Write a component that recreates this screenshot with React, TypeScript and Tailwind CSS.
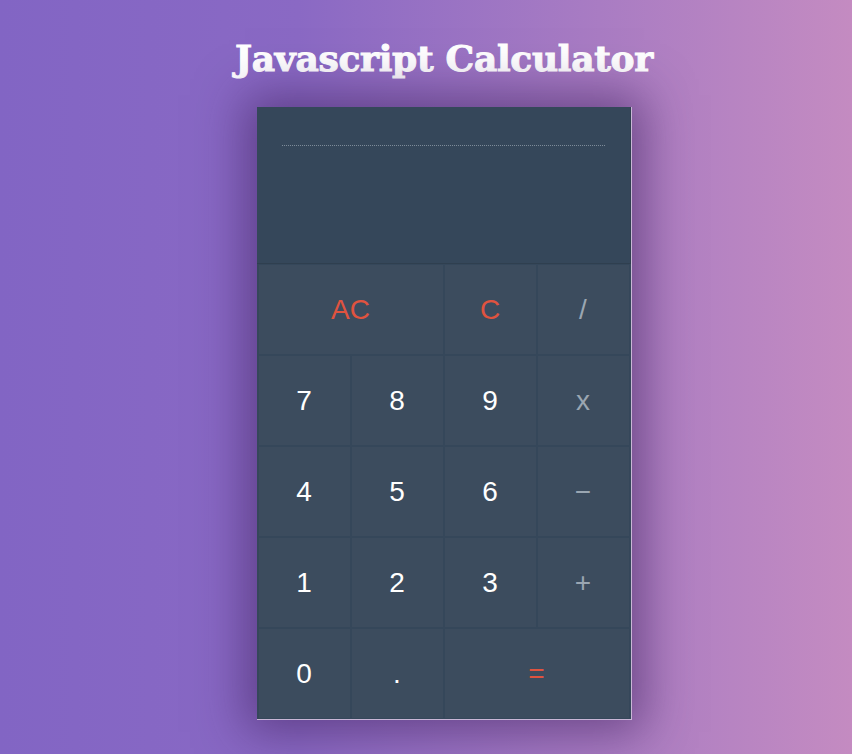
import React from "react";

type Key = { label: string; tone: "num" | "op" | "red"; span?: boolean };

const keys: Key[] = [
  { label: "AC", tone: "red", span: true },
  { label: "C", tone: "red" },
  { label: "/", tone: "op" },
  { label: "7", tone: "num" },
  { label: "8", tone: "num" },
  { label: "9", tone: "num" },
  { label: "x", tone: "op" },
  { label: "4", tone: "num" },
  { label: "5", tone: "num" },
  { label: "6", tone: "num" },
  { label: "−", tone: "op" },
  { label: "1", tone: "num" },
  { label: "2", tone: "num" },
  { label: "3", tone: "num" },
  { label: "+", tone: "op" },
  { label: "0", tone: "num" },
  { label: ".", tone: "num" },
  { label: "=", tone: "red", span: true },
];

const toneClass = {
  num: "text-white",
  op: "text-[#9aa6b2]",
  red: "text-[#e0533f]",
};

export default function App() {
  return (
    <div className="min-h-[754px] w-full bg-gradient-to-r from-[#8265c4] via-[#8a69c4] via-35% to-[#c48bc1] pl-9 font-['Liberation_Sans',Arial,sans-serif]">
      <div className="flex flex-col items-center pt-[34px]">
        <h1 className="font-['DejaVu_Serif',serif] text-[36px] font-bold leading-[48px] tracking-[-0.3px] text-white [-webkit-text-stroke:1px_white]">
          Javascript Calculator
        </h1>

        <div className="mt-[25px] w-[375px] border-r border-b border-[#c9b6d6] bg-[#35475a] shadow-[0_0_45px_12px_rgba(60,30,90,0.55)]">
          {/* display */}
          <div className="h-[157px] border-r border-b border-[#2f3f4f] px-[25px] pt-[38px]">
            <div className="border-b border-dotted border-[#7d8b99]" />
          </div>

          {/* keypad */}
          <div className="grid grid-cols-4 gap-[2px] px-[2px] py-[1px]">
            {keys.map((k) => (
              <button
                key={k.label}
                className={`flex h-[89px] items-center justify-center bg-[#3c4c5e] text-[28px] ${toneClass[k.tone]} ${k.span ? "col-span-2" : ""}`}
              >
                {k.label}
              </button>
            ))}
          </div>
        </div>
      </div>
    </div>
  );
}
